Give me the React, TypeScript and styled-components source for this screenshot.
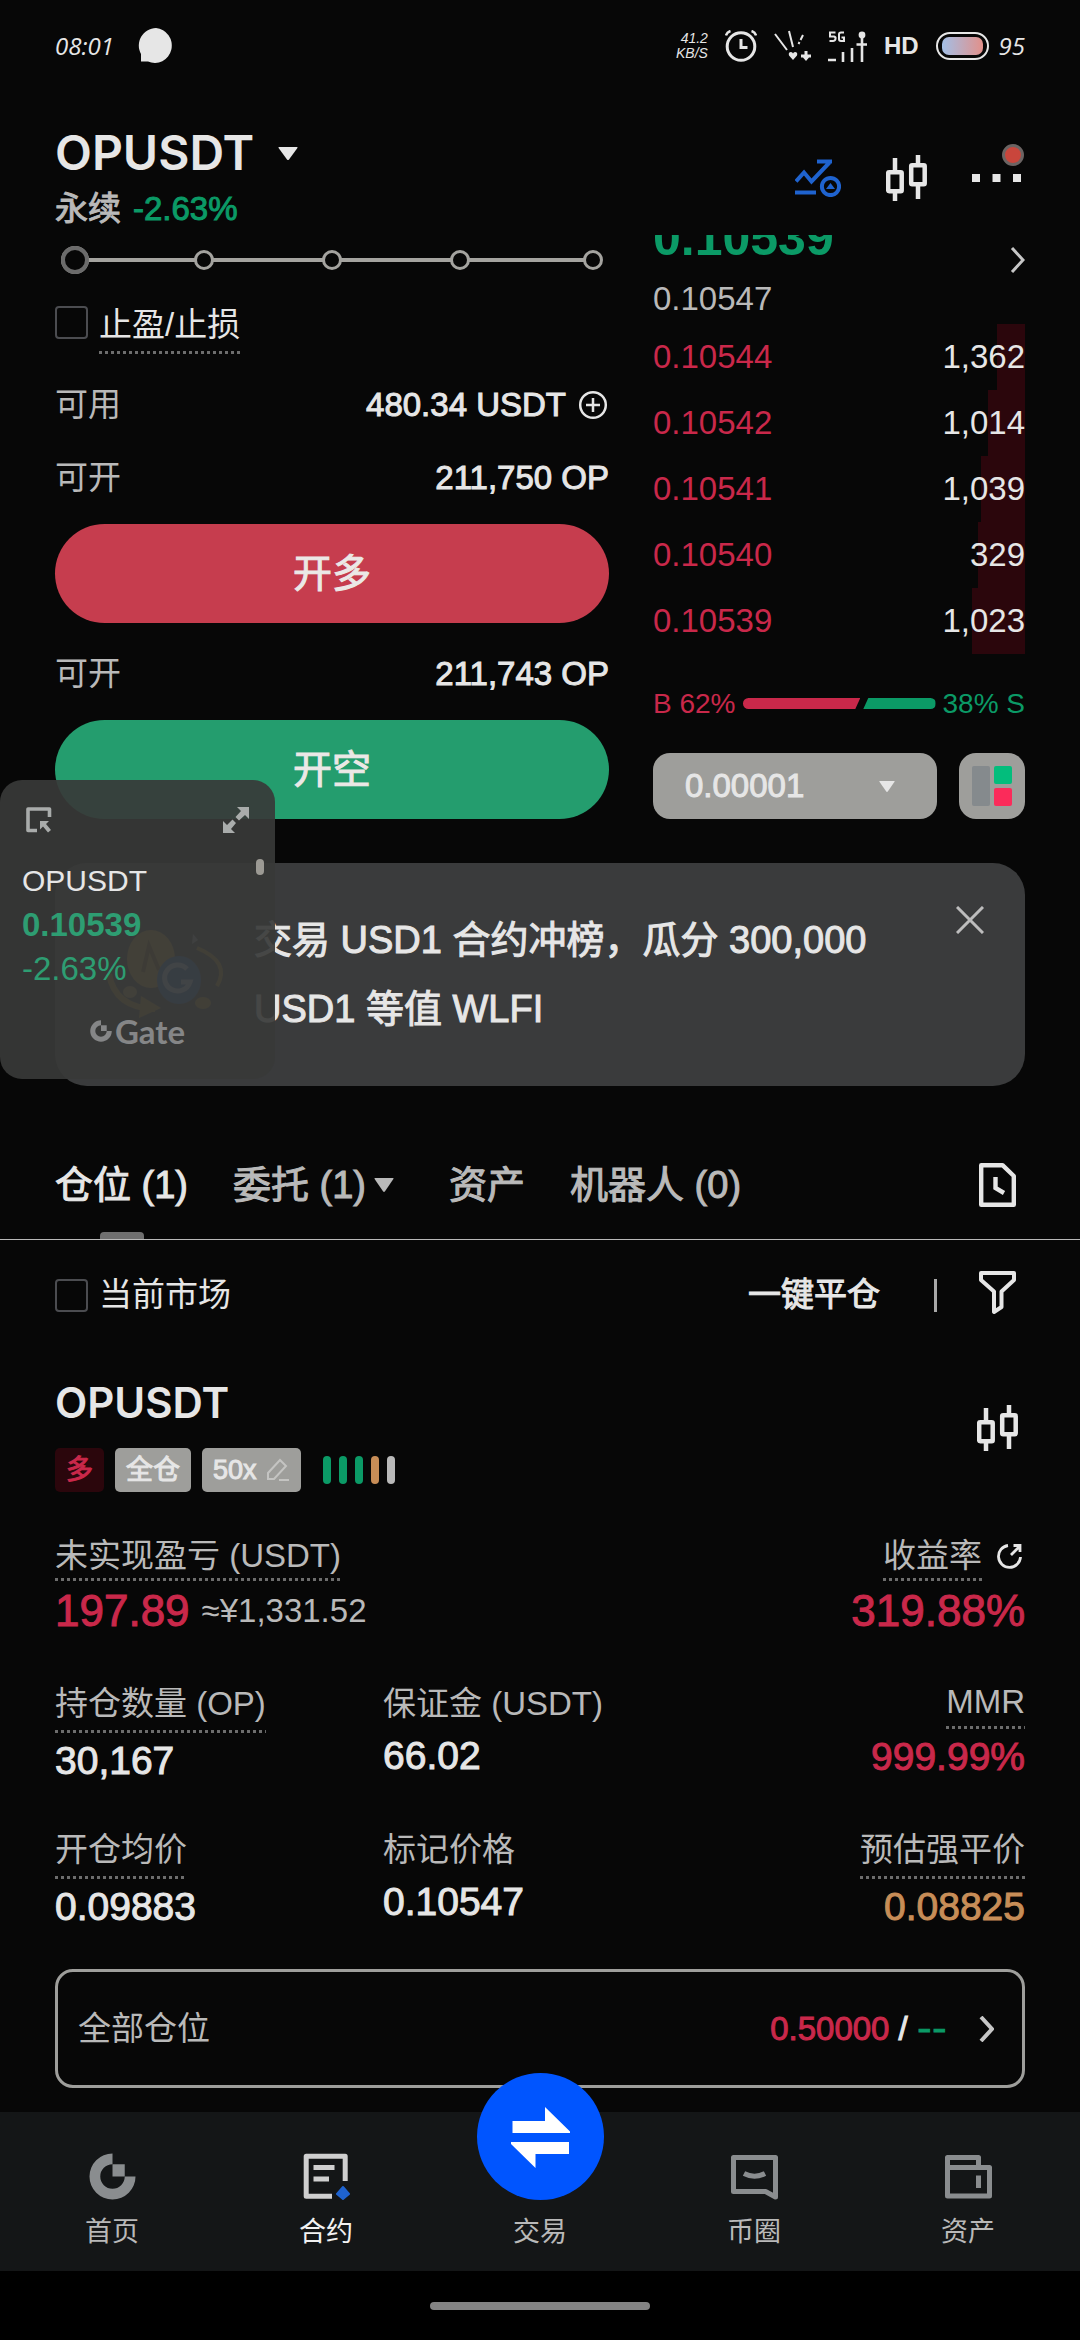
import React, { useState } from "react";
import styled, { createGlobalStyle, css } from "styled-components";

const color = {
  page: "#070707",
  nav: "#141617",
  text: "#e6e6e6",
  muted: "#b9b9b9",
  red: "#c9284a",
  redFill: "#c63d4e",
  redDim: "#2b060c",
  green: "#0b9a66",
  greenFill: "#249d6e",
  orange: "#c78d57",
  gray: "#9e9e9b",
  card: "#3a3b3c",
  blue: "#1f63cf",
};

const GlobalStyle = createGlobalStyle`
  *, *::before, *::after { box-sizing: border-box; }
  body {
    margin: 0;
    background: #000;
    color: ${color.text};
    font-family: "Liberation Sans", "Noto Sans CJK SC", sans-serif;
    font-size: 33px;
    line-height: 44px;
  }
  button, input, select { font: inherit; color: inherit; margin: 0; }
  button { background: none; border: 0; padding: 0; cursor: pointer; }
  a { color: inherit; text-decoration: none; }
  svg { display: block; flex: none; }
`;

const medium = css`
  -webkit-text-stroke: 1px currentColor;
`;

const dottedRule = css`
  background: repeating-linear-gradient(90deg, #6d6d6d 0 3px, transparent 3px 6px) bottom / 100% 3px no-repeat;
`;

const Page = styled.div`
  position: relative;
  display: flex;
  flex-direction: column;
  min-height: 100vh;
  background: ${color.page};
`;

/* ---------- status bar ---------- */

const StatusBar = styled.div`
  display: flex;
  align-items: center;
  gap: 24px;
  height: 92px;
  padding: 0 55px;
`;

const Handwritten = styled.span`
  font-family: "Open Sans", sans-serif;
  font-style: italic;
  font-size: 24px;
  line-height: 30px;
`;

const StatusIcons = styled.div`
  display: flex;
  align-items: center;
  gap: 17px;
  margin-left: auto;
`;

const Speed = styled.div`
  display: flex;
  flex-direction: column;
  align-items: flex-end;
  font-style: italic;
  font-size: 14px;
  line-height: 15px;
`;

const HdMark = styled.span`
  font-weight: 700;
  font-size: 24px;
  line-height: 30px;
`;

const Battery = styled.div`
  display: flex;
  align-items: center;
  gap: 10px;
`;

const BatteryShell = styled.div`
  width: 53px;
  height: 28px;
  padding: 3px 4px;
  border: 2px solid ${color.text};
  border-radius: 14px;
`;

const BatteryFill = styled.div`
  height: 100%;
  border-radius: 7px;
  background: linear-gradient(90deg, #a3bfe6, #e2908a);
`;

/* ---------- header ---------- */

const Header = styled.header`
  display: flex;
  justify-content: space-between;
  align-items: flex-end;
  height: 143px;
  padding: 0 55px;
`;

const PairBlock = styled.div`
  display: flex;
  flex-direction: column;
  gap: 4px;
  padding-bottom: 4px;
`;

const PairButton = styled.button`
  display: flex;
  align-items: center;
  gap: 24px;
`;

const PairTitle = styled.h1`
  margin: 0;
  font-family: Inter, "Liberation Sans", sans-serif;
  font-weight: 600;
  font-size: 48px;
  line-height: 60px;
`;

const PairMeta = styled.div`
  display: flex;
  gap: 12px;
  color: ${color.muted};
  ${medium}
`;

const Change = styled.span`
  color: ${color.green};
`;

const Actions = styled.div`
  display: flex;
  align-items: center;
  gap: 45px;
  height: 114px;
`;

const MoreButton = styled.button`
  position: relative;
  display: flex;
  align-items: center;
  width: 53px;
  height: 46px;
`;

const AlertDot = styled.span`
  position: absolute;
  top: -11px;
  right: 1px;
  width: 22px;
  height: 22px;
  border: 3px solid #6b6463;
  border-radius: 50%;
  background: #c9463c;
`;

/* ---------- trade area ---------- */

const Main = styled.main`
  flex: 1;
  overflow: hidden;
`;

const Trade = styled.section`
  display: grid;
  grid-template-columns: 554fr 372fr;
  gap: 44px;
  padding: 0 55px;
`;

const OrderForm = styled.form`
  display: flex;
  flex-direction: column;
`;

const SliderBox = styled.div`
  position: relative;
  display: grid;
  grid-template-columns: 133fr 128fr 128fr 133fr 20px;
  align-items: center;
  height: 50px;
  margin: 0 6px;

  &::before {
    content: "";
    position: absolute;
    left: 14px;
    right: 14px;
    height: 4px;
    background: #a4a39f;
  }
`;

const Stop = styled.span<{ $first?: boolean }>`
  position: relative;
  width: ${(p) => (p.$first ? 28 : 20)}px;
  height: ${(p) => (p.$first ? 28 : 20)}px;
  border: 3px solid #a4a39f;
  border-radius: 50%;
  background: ${color.page};
`;

const Range = styled.input`
  position: absolute;
  inset: 0;
  width: 100%;
  height: 100%;
  appearance: none;
  background: transparent;
  cursor: pointer;

  &::-webkit-slider-thumb {
    appearance: none;
    width: 28px;
    height: 28px;
    border: 4px solid #6b6b6b;
    border-radius: 50%;
    background: ${color.page};
  }
`;

const CheckLabel = styled.label<{ $top?: boolean }>`
  display: flex;
  align-items: ${(p) => (p.$top ? "flex-start" : "center")};
  gap: 11px;
  cursor: pointer;
`;

const Checkbox = styled.input`
  appearance: none;
  width: 33px;
  height: 33px;
  margin: 3px 0;
  border: 2px solid #4b4c50;
  border-radius: 4px;
  background: ${color.page};

  &:checked {
    background: ${color.muted};
  }
`;

const StopLossRow = styled.div`
  padding-top: 18px;
`;

const Dotted = styled.span`
  padding-bottom: 7px;
  ${dottedRule}
`;

const InfoRow = styled.div`
  display: flex;
  justify-content: space-between;
  margin-top: 29px;
`;

const InfoLabel = styled.span`
  color: ${color.muted};
`;

const InfoValue = styled.span`
  display: flex;
  align-items: center;
  gap: 11px;
  ${medium}
`;

const OrderButton = styled.button<{ $fill: string }>`
  height: 99px;
  margin-top: 24px;
  border-radius: 50px;
  background: ${(p) => p.$fill};
  color: #ebe8e6;
  font-size: 39px;
  ${medium}
`;

/* ---------- order book ---------- */

const Book = styled.div`
  display: flex;
  flex-direction: column;
  margin-top: -27px;
`;

const LastPriceRow = styled.div`
  display: flex;
  justify-content: space-between;
  height: 65px;
`;

const LastPrice = styled.strong`
  color: ${color.green};
  font-size: 50px;
  line-height: 60px;
`;

const ChevronButton = styled.button`
  align-self: flex-end;
`;

const IndexPrice = styled.div`
  color: ${color.muted};
  line-height: 51px;
`;

const AskTable = styled.table`
  width: 100%;
  border-collapse: collapse;
`;

const AskRow = styled.tr<{ $depth: number }>`
  height: 66px;
  background: linear-gradient(to left, ${color.redDim} ${(p) => p.$depth}%, transparent ${(p) => p.$depth}%);
`;

const AskPrice = styled.td`
  padding: 0;
  color: ${color.red};
`;

const AskSize = styled.td`
  padding: 0;
  text-align: right;
`;

const Ratio = styled.div`
  display: flex;
  align-items: center;
  gap: 7px;
  height: 99px;
  font-size: 28px;
`;

const RatioText = styled.span<{ $tone: string }>`
  color: ${(p) => p.$tone};
  white-space: nowrap;
`;

const RatioBar = styled.div`
  display: flex;
  flex: 1;
  gap: 3px;
  height: 11px;
`;

const RatioBuy = styled.div<{ $share: number }>`
  flex: ${(p) => p.$share};
  border-radius: 6px 0 0 6px;
  background: ${color.red};
  clip-path: polygon(0 0, 100% 0, calc(100% - 5px) 100%, 0 100%);
`;

const RatioSell = styled(RatioBuy)`
  border-radius: 0 6px 6px 0;
  background: ${color.green};
  clip-path: polygon(5px 0, 100% 0, 100% 100%, 0 100%);
`;

const BookControls = styled.div`
  display: flex;
  gap: 22px;
`;

const SelectBox = styled.label`
  display: flex;
  flex: 1;
  align-items: center;
  min-width: 0;
  height: 66px;
  padding: 0 42px 0 32px;
  border-radius: 17px;
  background: ${color.gray};
`;

const StepSelect = styled.select`
  flex: 1;
  min-width: 0;
  padding: 0;
  border: 0;
  appearance: none;
  background: transparent;
  ${medium}
`;

const LayoutButton = styled.button`
  display: flex;
  align-items: center;
  justify-content: center;
  width: 66px;
  height: 66px;
  border-radius: 17px;
  background: ${color.gray};
`;

/* ---------- notice ---------- */

const Notice = styled.aside`
  display: flex;
  align-items: flex-start;
  margin: 44px 55px 45px;
  padding: 43px 41px 42px 50px;
  border-radius: 32px;
  background: ${color.card};
`;

const NoticeArt = styled.div`
  width: 149px;
  padding-top: 20px;
`;

const NoticeText = styled.p`
  flex: 1;
  margin: 0;
  font-size: 38px;
  line-height: 69px;
  ${medium}
`;

/* ---------- tabs ---------- */

const TabBar = styled.nav`
  display: flex;
  align-items: stretch;
  gap: 45px;
  height: 109px;
  padding: 0 64px 0 55px;
  border-bottom: 1px solid ${color.muted};
`;

const Tab = styled.button<{ $active?: boolean; $menu?: boolean }>`
  position: relative;
  display: flex;
  align-items: center;
  gap: 8px;
  padding-right: ${(p) => (p.$menu ? 10 : 0)}px;
  font-size: 38px;
  white-space: nowrap;
  color: ${(p) => (p.$active ? color.text : color.muted)};
  ${medium}

  ${(p) =>
    p.$active &&
    css`
      &::after {
        content: "";
        position: absolute;
        bottom: 0;
        left: 50%;
        width: 44px;
        height: 7px;
        margin-left: -22px;
        border-radius: 4px 4px 0 0;
        background: #6f6f6f;
      }
    `}
`;

const TabAction = styled.button`
  margin-left: auto;
`;

/* ---------- positions ---------- */

const FilterRow = styled.div`
  display: flex;
  align-items: center;
  height: 110px;
  padding: 0 64px 0 55px;
`;

const CloseAll = styled.button`
  margin-left: auto;
  ${medium}
`;

const Divider = styled.span`
  width: 3px;
  height: 33px;
  margin: 0 42px 0 54px;
  background: #a8a8a8;
`;

const Position = styled.article`
  padding: 28px 55px 24px;
`;

const PositionHead = styled.div`
  display: flex;
  justify-content: space-between;
  align-items: flex-start;
`;

const PositionName = styled.h2`
  margin: 0 0 20px;
  font-family: Inter, "Liberation Sans", sans-serif;
  font-weight: 600;
  font-size: 42px;
  line-height: 50px;
`;

const ChartButton = styled.button`
  display: flex;
  align-items: center;
  height: 100px;
  padding-right: 7px;
`;

const Badges = styled.div`
  display: flex;
  align-items: center;
  gap: 11px;
`;

const Badge = styled.span<{ $side?: boolean }>`
  display: flex;
  align-items: center;
  gap: 9px;
  padding: 0 11px;
  border-radius: 5px;
  background: ${(p) => (p.$side ? color.redDim : color.gray)};
  color: ${(p) => (p.$side ? color.red : color.text)};
  font-size: 27px;
  ${medium}
`;

const Strength = styled.div`
  display: flex;
  gap: 8px;
  padding-left: 11px;
`;

const StrengthBar = styled.span<{ $tone: string }>`
  width: 8px;
  height: 28px;
  border-radius: 4px;
  background: ${(p) => p.$tone};
`;

const PnlRow = styled.div`
  display: flex;
  justify-content: space-between;
  margin: 42px 0 41px;
`;

const PnlCell = styled.div<{ $end?: boolean }>`
  display: flex;
  flex-direction: column;
  align-items: ${(p) => (p.$end ? "flex-end" : "flex-start")};
`;

const PnlLabel = styled.div`
  display: flex;
  align-items: center;
  gap: 14px;
  color: ${color.muted};
`;

const PnlDotted = styled(Dotted)`
  padding-bottom: 3px;
`;

const PnlValue = styled.div`
  display: flex;
  align-items: center;
  gap: 12px;
  color: ${color.red};
  font-size: 44px;
  line-height: 60px;
  ${medium}
`;

const Approx = styled.span`
  color: ${color.muted};
  font-size: 33px;
  -webkit-text-stroke: 0;
`;

const Stats = styled.dl`
  display: grid;
  grid-template-columns: repeat(3, 1fr);
  gap: 39px 14px;
  margin: 0 0 34px;
`;

const Stat = styled.div<{ $end?: boolean }>`
  display: flex;
  flex-direction: column;
  align-items: ${(p) => (p.$end ? "flex-end" : "flex-start")};
`;

const StatLabel = styled.dt<{ $dotted?: boolean; $latin?: boolean }>`
  color: ${color.muted};
  line-height: ${(p) => (p.$latin ? 40 : 44)}px;
  padding-bottom: ${(p) => (p.$dotted ? 7 : 2)}px;
  ${(p) => p.$dotted && dottedRule}
`;

const StatValue = styled.dd<{ $tone?: string }>`
  margin: 0;
  color: ${(p) => p.$tone ?? color.text};
  font-size: 39px;
  line-height: 56px;
  ${medium}
`;

const TpslButton = styled.button`
  display: flex;
  align-items: center;
  width: 100%;
  height: 119px;
  padding: 0 28px 0 20px;
  border: 3px solid ${color.gray};
  border-radius: 18px;
  color: ${color.muted};
`;

const TpslValue = styled.span`
  display: flex;
  gap: 9px;
  margin: 0 32px 0 auto;
  color: ${color.text};
  ${medium}
`;

const TakeProfit = styled.span`
  color: ${color.red};
`;

const StopLoss = styled.span`
  color: ${color.green};
  font-family: Inter, "Liberation Sans", sans-serif;
`;

/* ---------- bottom navigation ---------- */

const BottomNav = styled.nav`
  display: grid;
  grid-template-columns: repeat(5, 1fr);
  grid-template-rows: 159px;
  padding: 0 5px;
  background: ${color.nav};
`;

const NavLink = styled.a<{ $active?: boolean }>`
  position: relative;
  display: flex;
  flex-direction: column;
  align-items: center;
  justify-content: flex-end;
  gap: 12px;
  min-height: 0;
  padding-bottom: 19px;
  color: ${(p) => (p.$active ? "#f2f2f2" : color.muted)};
  font-size: 27px;
  line-height: 40px;
`;

const HomeArea = styled.div`
  display: flex;
  align-items: center;
  justify-content: center;
  height: 69px;
  background: #000;
`;

const HomeIndicator = styled.div`
  width: 220px;
  height: 8px;
  border-radius: 4px;
  background: #848484;
`;

/* ---------- floating ticker ---------- */

const Ticker = styled.section`
  position: absolute;
  top: 780px;
  left: 0;
  display: flex;
  flex-direction: column;
  width: 275px;
  height: 299px;
  padding: 27px 22px 0;
  border-radius: 22px;
  background: rgba(56, 57, 56, 0.92);
`;

const TickerTools = styled.div`
  display: flex;
  justify-content: space-between;
  padding: 0 4px;
  margin-bottom: 26px;
`;

const TickerHandle = styled.span`
  position: absolute;
  top: 79px;
  right: 11px;
  width: 8px;
  height: 16px;
  border-radius: 4px;
  background: #9c9a94;
`;

const TickerPair = styled.span`
  font-size: 30px;
`;

const TickerPrice = styled.strong`
  color: #2e9d72;
`;

const TickerChange = styled.span`
  color: #2e9d72;
`;

const TickerBrand = styled.div`
  display: flex;
  align-items: center;
  justify-content: center;
  gap: 3px;
  margin-top: 18px;
  color: #858687;
  font-family: Lato, sans-serif;
  font-weight: 700;
`;

/* ---------- drawings ---------- */

const Caret = ({ w = 20, h = 13, fill = color.text }: { w?: number; h?: number; fill?: string }) => (
  <svg width={w} height={h} viewBox="0 0 20 13" preserveAspectRatio="none">
    <path d="M1 0h18q1 0 .4 1L11 12.400q-1 1-2 0L.6 1Q0 0 1 0z" fill={fill} />
  </svg>
);

const Chevron = ({ thick = 3 }: { thick?: number }) => (
  <svg width="15" height="26" viewBox="0 0 15 26">
    <path d="M2 1l11 12L2 25" fill="none" stroke="#c6c6c6" strokeWidth={thick} />
  </svg>
);

const Candles = () => (
  <svg width="41" height="46" viewBox="0 0 41 46">
    <g fill="none" stroke={color.text} strokeWidth="4.500">
      <rect x="2.200" y="17.200" width="13.500" height="19" rx="1" />
      <path d="M9 3v14M9 37v9" />
      <rect x="25.200" y="10.200" width="13.500" height="19" rx="1" />
      <path d="M32 0v10M32 30v14" />
    </g>
  </svg>
);

const GateMark = ({ size, fill }: { size: number; fill: string }) => (
  <svg width={size} height={size} viewBox="0 0 48 48">
    <path d="M24 .5A23.500 23.500 0 1 0 47.500 24H36.500A12.500 12.500 0 1 1 24 11.500z" fill={fill} />
    <path d="M24 11.500h12.500V24H24z" fill={fill} />
  </svg>
);

const Signal = () => (
  <svg width="39" height="31" viewBox="0 0 39 31">
    <g fill="none" stroke={color.text} strokeWidth="2">
      <path d="M7.500 1.500H2V5.500h4q2 .5 1.500 2.500-.5 2-2.500 2H1.500M16 1.500h-3q-2 0-2 2v4.500q0 2 2 2h3V6.500h-2.500" />
      <path d="M0 29h8M15 21v10M24 17v14M34 5v26M28.500 13.500h10.500" strokeWidth="2.600" />
    </g>
    <circle cx="34" cy="4" r="3.400" fill={color.text} />
  </svg>
);

const Alarm = () => (
  <svg width="32" height="32" viewBox="0 0 32 32">
    <g fill="none" stroke={color.text} strokeWidth="3">
      <circle cx="16" cy="16.500" r="13.800" />
      <path d="M16 9v8.500h6.500" />
      <path d="M1 5.500Q2 2 5.500 1M31 5.500Q30 2 26.500 1" strokeWidth="2.500" />
    </g>
  </svg>
);

const Sparks = () => (
  <svg width="37" height="32" viewBox="0 0 37 32">
    <path d="M1 4l12 16M15 1l4 16M29 5l-2.500 5M25.500 12l-1 2" fill="none" stroke={color.text} strokeWidth="2" />
    <path d="M19 30l-4-4.500q-1-3.500 2-3.500 1.500 0 2 1.500.5-1.500 2-1.500 3 0 2 3.500zM30.500 21h3v3.500h3.500v3h-2l-3 3.500-3-3.500h-2v-3h3.500z" fill={color.text} />
  </svg>
);

const Trend = () => (
  <svg width="46" height="38" viewBox="0 0 46 38">
    <g fill="none" stroke={color.blue} strokeWidth="4">
      <path d="M1 22.500l8-9 7.500 9L34.500 3.500M22 2.500h15M0 33.500h21" />
      <circle cx="35.500" cy="27.500" r="8.600" />
    </g>
    <path d="M31 30l4.500-6 4.500 6z" fill={color.blue} />
  </svg>
);

const CoinArt = () => (
  <svg width="124" height="100" viewBox="0 0 124 100">
    <path d="M4 48Q10 82 50 83" fill="none" stroke="#a5842c" strokeWidth="6" />
    <path d="M36 70l20 12-22 10z" fill="#a5842c" />
    <path d="M92 22q34 14 20 38" fill="none" stroke="#a5842c" strokeWidth="4" />
    <ellipse cx="46" cy="33" rx="24" ry="29" fill="#b28a35" />
    <path d="M38 46l6-26 10 24" fill="none" stroke="#6e531d" strokeWidth="4" />
    <ellipse cx="25" cy="66" rx="7" ry="6" fill="#a58c50" />
    <ellipse cx="98" cy="77" rx="8" ry="6" fill="#a5842c" />
    <ellipse cx="74" cy="54" rx="22" ry="24" fill="#2e62b4" />
    <path d="M82 43a13 13 0 1 0 3 13h-9" fill="none" stroke="#a9bddd" strokeWidth="5" />
    <path d="M88 8l5 6-6 4z" fill="#8f9299" />
  </svg>
);

const asks = [
  { price: "0.10544", size: "1,362", depth: 7.5 },
  { price: "0.10542", size: "1,014", depth: 10 },
  { price: "0.10541", size: "1,039", depth: 12 },
  { price: "0.10540", size: "329", depth: 12.6 },
  { price: "0.10539", size: "1,023", depth: 14.2 },
];

const stats = [
  { label: "持仓数量 (OP)", value: "30,167", dotted: true },
  { label: "保证金 (USDT)", value: "66.02" },
  { label: "MMR", value: "999.99%", dotted: true, latin: true, end: true, tone: color.red },
  { label: "开仓均价", value: "0.09883", dotted: true },
  { label: "标记价格", value: "0.10547" },
  { label: "预估强平价", value: "0.08825", dotted: true, end: true, tone: color.orange },
];

const strength = [color.green, color.green, color.green, color.orange, color.muted];

export default function App() {
  const [amount, setAmount] = useState(0);

  return (
    <>
      <GlobalStyle />
      <Page>
        <StatusBar>
          <Handwritten>08:01</Handwritten>
          <svg width="35" height="36" viewBox="0 0 35 36">
            <path d="M18 0a17 17.500 0 1 1-8 33.500H3V26A17.500 17.500 0 0 1 18 0z" fill={color.text} />
          </svg>
          <StatusIcons>
            <Speed>
              <span>41.2</span>
              <span>KB/S</span>
            </Speed>
            <Alarm />
            <Sparks />
            <Signal />
            <HdMark>HD</HdMark>
            <Battery>
              <BatteryShell>
                <BatteryFill />
              </BatteryShell>
              <Handwritten>95</Handwritten>
            </Battery>
          </StatusIcons>
        </StatusBar>

        <Header>
          <PairBlock>
            <PairButton type="button">
              <PairTitle>OPUSDT</PairTitle>
              <Caret />
            </PairButton>
            <PairMeta>
              <span>永续</span>
              <Change>-2.63%</Change>
            </PairMeta>
          </PairBlock>
          <Actions>
            <button type="button" aria-label="策略">
              <Trend />
            </button>
            <button type="button" aria-label="K线">
              <Candles />
            </button>
            <MoreButton type="button" aria-label="更多">
              <svg width="49" height="8" viewBox="0 0 49 8">
                <path d="M0 0h8v8H0zM20.500 0h8v8h-8zM41 0h8v8h-8z" fill={color.text} />
              </svg>
              <AlertDot />
            </MoreButton>
          </Actions>
        </Header>

        <Main>
          <Trade>
            <OrderForm onSubmit={(e) => e.preventDefault()}>
              <SliderBox>
                <Stop $first />
                <Stop />
                <Stop />
                <Stop />
                <Stop />
                <Range
                  type="range"
                  min={0}
                  max={100}
                  value={amount}
                  aria-label="仓位比例"
                  onChange={(e) => setAmount(Number(e.target.value))}
                />
              </SliderBox>
              <StopLossRow>
                <CheckLabel $top>
                  <Checkbox type="checkbox" />
                  <Dotted>止盈/止损</Dotted>
                </CheckLabel>
              </StopLossRow>
              <InfoRow>
                <InfoLabel>可用</InfoLabel>
                <InfoValue>
                  480.34 USDT
                  <svg width="32" height="32" viewBox="0 0 32 32">
                    <g fill="none" stroke={color.text} strokeWidth="2.500">
                      <circle cx="16" cy="16" r="12.800" />
                      <path d="M16 9v14M9 16h14" />
                    </g>
                  </svg>
                </InfoValue>
              </InfoRow>
              <InfoRow>
                <InfoLabel>可开</InfoLabel>
                <InfoValue>211,750 OP</InfoValue>
              </InfoRow>
              <OrderButton type="submit" $fill={color.redFill}>
                开多
              </OrderButton>
              <InfoRow>
                <InfoLabel>可开</InfoLabel>
                <InfoValue>211,743 OP</InfoValue>
              </InfoRow>
              <OrderButton type="submit" $fill={color.greenFill}>
                开空
              </OrderButton>
            </OrderForm>

            <Book>
              <LastPriceRow>
                <LastPrice>0.10539</LastPrice>
                <ChevronButton type="button" aria-label="详情">
                  <Chevron />
                </ChevronButton>
              </LastPriceRow>
              <IndexPrice>0.10547</IndexPrice>
              <AskTable>
                <tbody>
                  {asks.map((ask) => (
                    <AskRow key={ask.price} $depth={ask.depth}>
                      <AskPrice>{ask.price}</AskPrice>
                      <AskSize>{ask.size}</AskSize>
                    </AskRow>
                  ))}
                </tbody>
              </AskTable>
              <Ratio>
                <RatioText $tone={color.red}>B 62%</RatioText>
                <RatioBar>
                  <RatioBuy $share={62} />
                  <RatioSell $share={38} />
                </RatioBar>
                <RatioText $tone={color.green}>38% S</RatioText>
              </Ratio>
              <BookControls>
                <SelectBox>
                  <StepSelect aria-label="深度精度" defaultValue="0.00001">
                    <option>0.00001</option>
                  </StepSelect>
                  <Caret w={16} h={11} />
                </SelectBox>
                <LayoutButton type="button" aria-label="盘口布局">
                  <svg width="40" height="40" viewBox="0 0 40 40">
                    <rect width="18" height="40" rx="2" fill="#858a8d" />
                    <rect x="22" width="18" height="18" rx="2" fill="#03bd7c" />
                    <rect x="22" y="22" width="18" height="18" rx="2" fill="#fb2b5a" />
                  </svg>
                </LayoutButton>
              </BookControls>
            </Book>
          </Trade>

          <Notice>
            <NoticeArt>
              <CoinArt />
            </NoticeArt>
            <NoticeText>交易 USD1 合约冲榜，瓜分 300,000 USD1 等值 WLFI</NoticeText>
            <button type="button" aria-label="关闭">
              <svg width="28" height="28" viewBox="0 0 28 28">
                <path d="M1 1l26 26M27 1L1 27" stroke="#bdbdbd" strokeWidth="3" />
              </svg>
            </button>
          </Notice>

          <TabBar>
            <Tab type="button" $active>
              仓位 (1)
            </Tab>
            <Tab type="button" $menu>
              委托 (1)
              <Caret h={14} fill={color.muted} />
            </Tab>
            <Tab type="button">资产</Tab>
            <Tab type="button">机器人 (0)</Tab>
            <TabAction type="button" aria-label="历史记录">
              <svg width="37" height="44" viewBox="0 0 37 44">
                <path d="M2.200 2.200h21.300L34.800 13v28.800H2.200z" fill="none" stroke={color.text} strokeWidth="4.400" strokeLinejoin="round" />
                <path d="M16.500 14v11l8.500 5" fill="none" stroke={color.text} strokeWidth="4.400" />
              </svg>
            </TabAction>
          </TabBar>

          <FilterRow>
            <CheckLabel>
              <Checkbox type="checkbox" />
              <span>当前市场</span>
            </CheckLabel>
            <CloseAll type="button">一键平仓</CloseAll>
            <Divider />
            <button type="button" aria-label="筛选">
              <svg width="37" height="48" viewBox="0 0 37 48">
                <path d="M2 2h33v7L22.500 20.500V36L15 41V20.500L2 9z" fill="none" stroke={color.text} strokeWidth="4" strokeLinejoin="round" />
              </svg>
            </button>
          </FilterRow>

          <Position>
            <PositionHead>
              <div>
                <PositionName>OPUSDT</PositionName>
                <Badges>
                  <Badge $side>多</Badge>
                  <Badge>全仓</Badge>
                  <Badge>
                    50x
                    <svg width="24" height="24" viewBox="0 0 24 24">
                      <path d="M2 21v-6L14 2l6 6L8 21zM13 22h10" fill="none" stroke="#c4c4c2" strokeWidth="2" />
                    </svg>
                  </Badge>
                  <Strength>
                    {strength.map((tone, i) => (
                      <StrengthBar key={i} $tone={tone} />
                    ))}
                  </Strength>
                </Badges>
              </div>
              <ChartButton type="button" aria-label="K线">
                <Candles />
              </ChartButton>
            </PositionHead>

            <PnlRow>
              <PnlCell>
                <PnlLabel>
                  <PnlDotted>未实现盈亏 (USDT)</PnlDotted>
                </PnlLabel>
                <PnlValue>
                  197.89 <Approx>≈¥1,331.52</Approx>
                </PnlValue>
              </PnlCell>
              <PnlCell $end>
                <PnlLabel>
                  <PnlDotted>收益率</PnlDotted>
                  <svg width="29" height="32" viewBox="0 0 29 32">
                    <path d="M12 3.500A11 11 0 1 0 24.500 15M15 13l8.500-8.500M17.500 3.500H24V10" fill="none" stroke={color.text} strokeWidth="2.800" />
                  </svg>
                </PnlLabel>
                <PnlValue>319.88%</PnlValue>
              </PnlCell>
            </PnlRow>

            <Stats>
              {stats.map((s) => (
                <Stat key={s.label} $end={s.end}>
                  <StatLabel $dotted={s.dotted} $latin={s.latin}>
                    {s.label}
                  </StatLabel>
                  <StatValue $tone={s.tone}>{s.value}</StatValue>
                </Stat>
              ))}
            </Stats>

            <TpslButton type="button">
              全部仓位
              <TpslValue>
                <TakeProfit>0.50000</TakeProfit>
                <span>/</span>
                <StopLoss>--</StopLoss>
              </TpslValue>
              <Chevron thick={4} />
            </TpslButton>
          </Position>
        </Main>

        <BottomNav>
          <NavLink href="#home">
            <GateMark size={47} fill="#8a8d8f" />
            首页
          </NavLink>
          <NavLink href="#futures" $active>
            <svg width="47" height="47" viewBox="0 0 47 47">
              <path d="M29 43.200H3.200V3.200h39V28" fill="none" stroke="#cfcfcf" strokeWidth="5" strokeLinejoin="round" />
              <path d="M10.500 14.500h21M10.500 26h15.500" stroke="#cfcfcf" strokeWidth="5" />
              <path d="M40 34l6 7-6 5-6-5z" fill={color.blue} stroke={color.blue} strokeWidth="2" strokeLinejoin="round" />
            </svg>
            合约
          </NavLink>
          <NavLink href="#trade">
            <svg width="127" height="127" viewBox="0 0 127 127">
              <circle cx="63.500" cy="63.500" r="63.500" fill="#0055ff" />
              <path d="M35.500 48H68V34l25 24.500V60H35.500zM34 69h58v12H58.500v14L34 71z" fill="#fff" />
            </svg>
            交易
          </NavLink>
          <NavLink href="#circle">
            <svg width="47" height="47" viewBox="0 0 47 47">
              <path d="M2.500 4.500h42v39.500L34.500 38.500h-32z" fill="none" stroke="#8a8d8f" strokeWidth="5" strokeLinejoin="round" />
              <path d="M13 20.500q10.500 5.500 21 0" fill="none" stroke="#8a8d8f" strokeWidth="5" />
            </svg>
            币圈
          </NavLink>
          <NavLink href="#assets">
            <svg width="47" height="47" viewBox="0 0 47 47">
              <g fill="none" stroke="#8a8d8f" strokeWidth="5" strokeLinejoin="round">
                <path d="M2.500 14.500h42v28.500h-42z" />
                <path d="M2.500 14.500V4.500h31v10" />
                <path d="M33.500 22.500v12.500" />
              </g>
            </svg>
            资产
          </NavLink>
        </BottomNav>
        <HomeArea>
          <HomeIndicator />
        </HomeArea>

        <Ticker>
          <TickerTools>
            <button type="button" aria-label="还原">
              <svg width="26" height="26" viewBox="0 0 26 26">
                <path d="M11 23.500H2V2h21.500v8" fill="none" stroke="#a9acab" strokeWidth="3.600" strokeLinejoin="round" />
                <path d="M14 14h9l-3 3 5 6-3 2.500-5-6-3 3z" fill="#a9acab" />
              </svg>
            </button>
            <button type="button" aria-label="展开">
              <svg width="26" height="26" viewBox="0 0 26 26">
                <path d="M14 0h12v12l-4-4-6 5.500-3.500-3.500L18 4zM12 26H0V14l4 4 5.500-5.500L13 16l-5 6z" fill="#a9acab" />
              </svg>
            </button>
          </TickerTools>
          <TickerHandle />
          <TickerPair>OPUSDT</TickerPair>
          <TickerPrice>0.10539</TickerPrice>
          <TickerChange>-2.63%</TickerChange>
          <TickerBrand>
            <GateMark size={22} fill="#858687" />
            Gate
          </TickerBrand>
        </Ticker>
      </Page>
    </>
  );
}
